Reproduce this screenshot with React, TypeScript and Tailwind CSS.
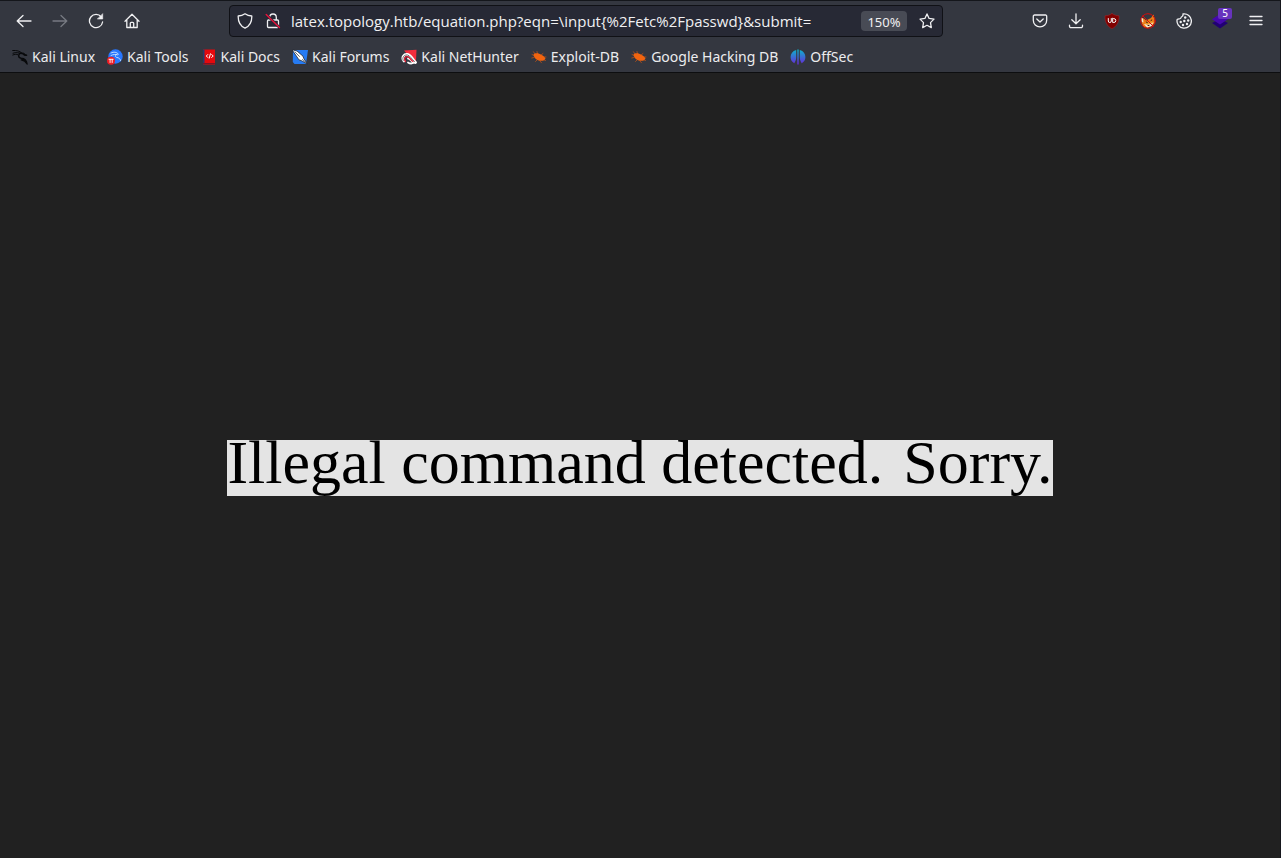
import type { ReactNode } from "react";

function Icon({ children }: { children: ReactNode }) {
  return (
    <svg
      viewBox="0 0 16 16"
      className="size-4 shrink-0"
      fill="none"
      stroke="currentColor"
      strokeWidth="1.3"
      strokeLinecap="round"
      strokeLinejoin="round"
      aria-hidden="true"
    >
      {children}
    </svg>
  );
}

function ToolButton({ label, disabled, children }: { label: string; disabled?: boolean; children: ReactNode }) {
  return (
    <button
      type="button"
      aria-label={label}
      disabled={disabled}
      className="relative flex h-8 w-9 shrink-0 items-center justify-center text-[#f0f0f2] disabled:text-[#777a82]"
    >
      {children}
    </button>
  );
}

const bug = (
  <Icon>
    <g stroke="#e8590c" strokeWidth="0.6">
      <path d="M4 5 2.5 2.8M6.5 5 6 2.5M10 6l2-1.500M12 8h3M12 10.500l2.500 1M9 12l1.500 1.800M6 11l-1.500 1.500M3 8.500.8 9M3 6.500 1 5.500" />
    </g>
    <path d="M2.500 5.500C4 3.800 8 4 10.500 6c1.800.5 3.200 2 4 3.500-.8 1.500-2.500 2.500-4.500 2.300C6.500 12 3 9.500 2.500 5.500Z" fill="#f2640f" stroke="none" />
  </Icon>
);

const bookmarks: { name: string; icon: ReactNode }[] = [
  {
    name: "Kali Linux",
    icon: (
      <Icon>
        <g stroke="#08090b">
          <path d="M.7 1.500c4-.3 7.300.5 9.300 2.800M1 4.200c3-1 5.500-.7 8.500.5M.8 6c2-.8 3.500-.8 5-.3" strokeWidth="1" />
          <path d="M9 4c-3 1-3.300 4.800.2 5.300 3 .3 5.200 1.500 5.900 5.700-1.800-3.200-3.400-3.700-5.800-4.200" strokeWidth="1.400" />
          <path d="M9 4.200c2-.7 3.500.2 4.300 1.300l1.800.8-2.300.2L11 5.500" fill="#08090b" strokeWidth="1" />
        </g>
      </Icon>
    ),
  },
  {
    name: "Kali Tools",
    icon: (
      <Icon>
        <circle cx="8.500" cy="7.500" r="7.200" fill="#2777ff" stroke="none" />
        <path d="M4 4c3-1.500 5.500-1 7.500 1.200M4 6.500c2.500-1.300 4.500-1.200 6.500-.7M9.500 5.500C7.500 6.500 8.300 8.200 10 8.500c2 .2 3.300 1.500 3.600 3" stroke="#cfe6ff" strokeWidth=".9" />
        <circle cx="4" cy="11.800" r="4" fill="#ed1c24" stroke="none" />
        <path d="M2 10.300h4.200M3.100 10.300v3.200M5.200 10.300v3.200" stroke="#fff" strokeWidth=".9" />
      </Icon>
    ),
  },
  {
    name: "Kali Docs",
    icon: (
      <Icon>
        <path d="M2 .5h12v15H2z" fill="#e5090d" stroke="none" />
        <path d="M2 .5h1.500v15H2z" fill="#243b70" stroke="none" />
        <path d="M2.500 14.500h11" stroke="#7b1424" strokeWidth="1" />
        <path d="M6.800 5.500 5.300 7l1.500 1.500M10.700 5.500 12.200 7l-1.500 1.500M9.400 4.800l-1.200 4.400" stroke="#fff" strokeWidth="1" />
      </Icon>
    ),
  },
  {
    name: "Kali Forums",
    icon: (
      <Icon>
        <path d="M1 1h15l-2 14H2.500L.8 13Z" fill="#267bf4" stroke="none" />
        <path d="M.3.800 5 2l6 5.200.8 2.300 3.700 5.500-6-3.300-2.500-.8L4 6.500Z" fill="#fff" stroke="#222630" strokeWidth=".8" />
        <path d="m3 3 4.500 4.500M10.500 10.500l3 2.500" stroke="#273144" strokeWidth=".7" />
      </Icon>
    ),
  },
  {
    name: "Kali NetHunter",
    icon: (
      <Icon>
        <path d="M3 1.500 15.500.8 15 12l-3 1L6 5Z" fill="#f22d3c" stroke="none" />
        <path d="M3 12C.3 8.500 3 5 6.500 5.500c3 .5 4.500 4 8 8" stroke="#fff" strokeWidth="2.800" />
        <path d="M7 9.500c2 0 3 3 6 4.300-2 1-4.500.7-6-.3" stroke="#fff" strokeWidth="1.800" />
        <path d="M4.500 12.500c-2-2.500-.8-5.200 2-4.800 2.300.4 3 3.200 5.500 4.800" stroke="#e21d35" strokeWidth="1.300" />
        <path d="M2.200 11.500C.8 8 3.500 5.500 6.500 6c2.500.5 4 4 7 6.500" stroke="#171717" strokeWidth=".6" />
      </Icon>
    ),
  },
  { name: "Exploit-DB", icon: bug },
  { name: "Google Hacking DB", icon: bug },
  {
    name: "OffSec",
    icon: (
      <Icon>
        <defs>
          <linearGradient id="offsec" x1="0" y1="0" x2="0" y2="1">
            <stop offset="0" stopColor="#0bb5cc" />
            <stop offset="1" stopColor="#6826db" />
          </linearGradient>
        </defs>
        <path d="M6.200 1C2.500 2 .6 4.700.6 8c0 2.700 1.300 5 3.700 6.200C5.800 12 6.200 10 6.200 8ZM9.800 1c3.700 1 5.600 3.700 5.600 7 0 2.700-1.300 5-3.700 6.200C10.200 12 9.800 10 9.800 8ZM7.300.500h1.400v15H7.300Z" fill="url(#offsec)" stroke="none" />
      </Icon>
    ),
  },
];

function AddressBar() {
  return (
    <form
      className="mx-[79px] flex h-8 min-w-0 flex-1 items-center rounded border border-[#101116] bg-[#272935] px-[7px] text-[#f0f0f2]"
      onSubmit={(e) => e.preventDefault()}
    >
      <button type="button" aria-label="Tracking protection" className="shrink-0">
        <Icon>
          <path d="M8 .8c2 1.500 4.300 2.200 6.800 2.200.2 5.500-2 10-6.800 12.200C3.200 13 1 8.500 1.200 3 3.700 3 6 2.300 8 .8Z" />
        </Icon>
      </button>
      <button type="button" aria-label="Connection is not secure" className="ml-3 shrink-0">
        <Icon>
          <path d="M4.700 7V4.300a3.300 3.300 0 0 1 6.600 0V7M3.500 7h9a1 1 0 0 1 1 1v5.500a1 1 0 0 1-1 1h-9a1 1 0 0 1-1-1V8a1 1 0 0 1 1-1Z" />
          <path d="m1.200 1.500 13.300 13" stroke="#272935" strokeWidth="2.600" />
          <path d="m1.200 1.500 13.300 13" stroke="#e9133c" strokeWidth="1.400" />
        </Icon>
      </button>
      <input
        aria-label="Address"
        className="ml-[10px] min-w-0 flex-1 bg-transparent font-['Open_Sans','Noto_Sans',sans-serif] text-[15px] leading-5 outline-none"
        defaultValue="latex.topology.htb/equation.php?eqn=\input{%2Fetc%2Fpasswd}&submit="
      />
      <button type="button" className="h-5 w-[46px] shrink-0 rounded-sm bg-[#484b55] text-[13px] leading-[22px]">
        150%
      </button>
      <button type="button" aria-label="Bookmark this page" className="ml-3 shrink-0">
        <Icon>
          <path d="m8 .9 2.100 4.500 4.900.7-3.500 3.500.8 5L8 12.300l-4.300 2.300.8-5L1 6.100l4.900-.7Z" />
        </Icon>
      </button>
    </form>
  );
}

export default function App() {
  return (
    <div className="flex min-h-screen flex-col border-r border-[#16171d] bg-[#212121] font-['Noto_Sans',sans-serif]">
      <header className="border-b border-t border-b-[#0d0e10] border-t-[#14161b] bg-[#343740]">
        <nav aria-label="Navigation" className="flex h-10 items-center px-[6px]">
          <ToolButton label="Back">
            <Icon><path d="M15 8H1.200M7 2.500 1.200 8 7 13.500" /></Icon>
          </ToolButton>
          <ToolButton label="Forward" disabled>
            <Icon><path d="M1 8h13.800M9 2.500 14.800 8 9 13.500" /></Icon>
          </ToolButton>
          <ToolButton label="Reload">
            <Icon>
              <path d="M13.300 4A6.600 6.600 0 1 0 14.600 9" />
              <path d="M14.700 1v5h-5Z" fill="currentColor" strokeWidth=".6" />
            </Icon>
          </ToolButton>
          <ToolButton label="Home">
            <Icon>
              <path d="M1 8.300 8 1.300l7 7M2.800 7v7.500h10.400V7M6.300 14.300v-4a1 1 0 0 1 1-1h1.400a1 1 0 0 1 1 1v4" />
            </Icon>
          </ToolButton>
          <AddressBar />
          <ToolButton label="Save to Pocket">
            <Icon>
              <path d="M2.500 2h11a1.200 1.200 0 0 1 1.200 1.200v4A6.700 6.700 0 0 1 1.300 7.200v-4A1.200 1.200 0 0 1 2.500 2ZM4.800 6 8 9l3.200-3" />
            </Icon>
          </ToolButton>
          <ToolButton label="Downloads">
            <Icon><path d="M8 .8v9.800M3.800 6.700 8 10.800l4.200-4.100M1.500 12.200v1a1.500 1.500 0 0 0 1.500 1.500h10a1.500 1.500 0 0 0 1.500-1.500v-1" /></Icon>
          </ToolButton>
          <ToolButton label="uBlock Origin">
            <Icon>
              <path d="M8 .5c2 1.500 4.500 2.200 7 2.300.3 6-2 10.500-7 12.900C3 13.300.7 8.800 1 2.800 3.500 2.700 6 2 8 .5Z" fill="#800000" stroke="#a52a2f" strokeWidth=".5" />
              <path d="M4.300 5.500v2.500a1.500 1.500 0 0 0 3 0V5.500M8.700 5.500v4h1.100a2 2 0 0 0 0-4Z" stroke="#fff" strokeWidth="1" />
            </Icon>
          </ToolButton>
          <ToolButton label="FoxyProxy">
            <Icon>
              <path d="m1 5 3 .5 2 2 5-2.500 2.500-3.500 1 3.500.3 5-3 3-4 2-4-1-2-4Z" fill="#ef7c16" stroke="none" />
              <path d="m1 5 2 .5.500 4L2 9ZM4 11l3 .5 3-1.500 3.500-1-2 4-4.500 1.500Z" fill="#f2ead9" stroke="none" />
              <path d="m4.500 10.500 3 1.300 2-.3 3.500-2-1-1.500Z" fill="#ee9a2c" stroke="none" />
              <path d="m6.200 9 1.200.6M11 7.500l.8-.5M8 12.500h1" stroke="#362017" strokeWidth="1" />
              <circle cx="8" cy="8" r="7.300" stroke="#d40c0c" strokeWidth="1" />
              <path d="m2.800 2.800 10.400 10.400" stroke="#d40c0c" strokeWidth="1" />
            </Icon>
          </ToolButton>
          <ToolButton label="Cookie Editor">
            <Icon>
              <path d="M7 .9c.2 1.500-.2 2.300-1 2.600-.8.300-1 .8-1.200 1.600-.3.900-1.500.6-3.600 1.200A7.200 7.200 0 1 0 7 .9Z" />
              <g fill="currentColor" stroke="none">
                <circle cx="9.200" cy="4.500" r="1.200" />
                <circle cx="12.200" cy="7.500" r="1.200" />
                <circle cx="8.300" cy="8" r="1.200" />
                <circle cx="4.700" cy="9" r="1.200" />
                <circle cx="11" cy="11" r="1.200" />
                <circle cx="7" cy="12" r="1.200" />
              </g>
            </Icon>
          </ToolButton>
          <ToolButton label="Wappalyzer, 5 technologies">
            <Icon>
              <path d="m0 10 8-4 8 4-8 5.500Z" fill="#210073" stroke="none" />
              <path d="m0 6.200 8-5.200 8 5.200-8 5.300Z" fill="#4608ad" stroke="none" />
            </Icon>
            <span className="absolute right-[6px] top-[3px] h-[11px] w-[14px] rounded-xs bg-[#6733bd] text-center text-[10px] leading-[11px] text-white">
              5
            </span>
          </ToolButton>
          <ToolButton label="Open menu">
            <Icon><path d="M2 3.500h12M2 7.500h12M2 11.500h12" /></Icon>
          </ToolButton>
        </nav>
        <nav aria-label="Bookmarks" className="flex h-[31px] items-center gap-3 pl-3 text-[14px] leading-5 text-[#ececee]">
          {bookmarks.map((b) => (
            <a key={b.name} href="#" className="flex shrink-0 items-center gap-1 whitespace-nowrap">
              {b.icon}
              {b.name}
            </a>
          ))}
        </nav>
      </header>
      <main className="flex flex-1 items-center justify-center pt-[5px]">
        <p className="flex h-14 items-start whitespace-nowrap bg-[#e4e4e4] font-['Liberation_Serif',serif] text-[62px] leading-[44px] text-black">
          <span>Illegal command detected.</span>
          <span className="ml-5">Sorry.</span>
        </p>
      </main>
    </div>
  );
}
